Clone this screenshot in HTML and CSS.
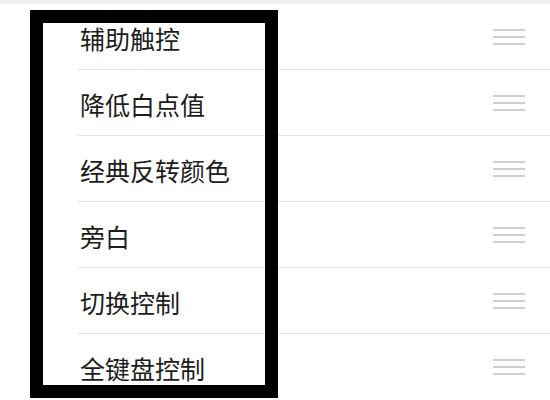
FILE: index.html
```html
<!DOCTYPE html>
<html lang="zh">
  <head>
    <meta charset="UTF-8" />
    <meta name="viewport" content="width=device-width, initial-scale=1.0" />
    <title>辅助功能快捷键</title>
    <link rel="stylesheet" href="styles.css">
  </head>
  <body>
    <!-- striscia grigia in alto -->
    <div class="top-band"></div>

    <ul class="shortcut-list">
      <li class="row"><span class="label">辅助触控</span><span class="handle"><i></i><i></i><i></i></span></li>
      <li class="row"><span class="label">降低白点值</span><span class="handle"><i></i><i></i><i></i></span></li>
      <li class="row"><span class="label">经典反转颜色</span><span class="handle"><i></i><i></i><i></i></span></li>
      <li class="row"><span class="label">旁白</span><span class="handle"><i></i><i></i><i></i></span></li>
      <li class="row"><span class="label">切换控制</span><span class="handle"><i></i><i></i><i></i></span></li>
      <li class="row"><span class="label">全键盘控制</span><span class="handle"><i></i><i></i><i></i></span></li>
    </ul>

    <!-- riquadro nero disegnato sopra -->
    <div class="mark-frame"></div>
  </body>
</html>
```

FILE: styles.css
```css
body,
html {
  margin: 0;
  padding: 0;
  width: 100%;
  height: 100%;
  background-color: #fff;
  font-family: "Noto Sans CJK SC", "Noto Sans", sans-serif;
  color: #1c1c1c;
  overflow: hidden;
}

.top-band {
  height: 4px;
  background-color: #efeff4;
}

.shortcut-list {
  list-style: none;
  margin: 0;
  padding: 0 0 0 78px;
}

.row {
  display: flex;
  align-items: center;
  justify-content: space-between;
  height: 65px;
  padding: 0 25px 0 2px;
  border-bottom: 1px solid #e3e3e6;
}

.row:last-child {
  border-bottom: none;
}

.label {
  font-size: 25px;
  line-height: 1;
  padding-top: 4px;
}

/* icona di trascinamento */
.handle {
  display: flex;
  flex-direction: column;
  gap: 5px;
  width: 32px;
}

.handle i {
  display: block;
  height: 2px;
  background-color: #cfcfd2;
}

/* Riquadro nero sopra la lista */
.mark-frame {
  position: absolute;
  top: 10px;
  left: 30px;
  width: 248px;
  height: 388px;
  box-sizing: border-box;
  border: 13px solid #000;
}
```
